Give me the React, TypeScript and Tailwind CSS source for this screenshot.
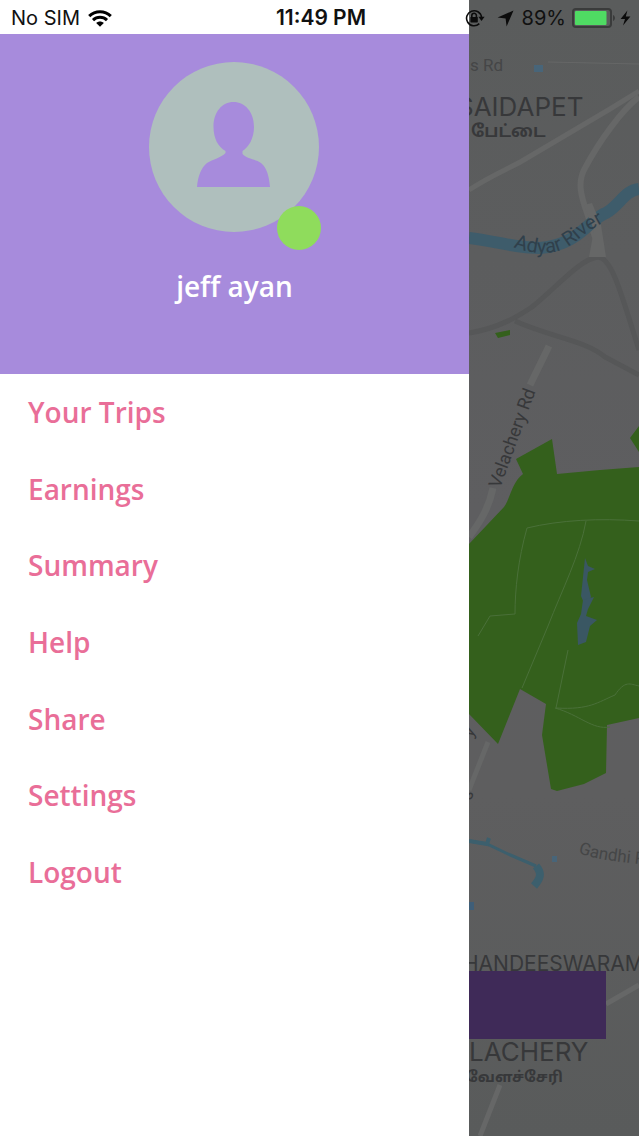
/**
 * App - driver side menu opened over the dimmed map
 *
 * 1. StatusBar lies across both halves
 * 2. Drawer: profile header + menu links
 * 3. DimmedMap fills whatever width is left
 */
const MENU_ITEMS = ['Your Trips', 'Earnings', 'Summary', 'Help', 'Share', 'Settings', 'Logout'];

// === Status bar icons ===
function WifiIcon() {
  return (
    <svg viewBox="0 0 24 17" className="h-[17px] w-6" fill="none" stroke="#000" strokeWidth="3">
      <path d="M1.2 6.2C7.2.4 16.8.4 22.8 6.2" />
      <path d="M5 10.2C9 6.4 15 6.4 19 10.2" />
      <path d="M8.2 13C10.4 11 13.6 11 15.8 13L12 16.8Z" fill="#000" stroke="none" />
    </svg>
  );
}

function RotationLockIcon() {
  return (
    <svg viewBox="0 0 20 18" className="h-[18px] w-5" fill="none" stroke="#0b0b0b" strokeWidth="1.6">
      <path d="M14.3 14.6A7.5 7.5 0 1 1 16.5 8.2" />
      <path d="M13.4 7.7H19.6L16.5 12Z" fill="#0b0b0b" stroke="none" />
      <rect x="5.4" y="8" width="7.4" height="5.4" rx=".6" fill="#0b0b0b" stroke="none" />
      <path d="M6.8 8.4V6.6A2.3 2.3 0 0 1 11.4 6.6V8.4" />
    </svg>
  );
}

function LocationIcon() {
  return (
    <svg viewBox="0 0 17 17" className="size-[17px]" fill="#0b0b0b">
      <path d="M16.5.5 9.6 16.4 8.6 8.6.6 7.5Z" />
    </svg>
  );
}

function BatteryIcon() {
  return (
    <svg viewBox="0 0 44 20" className="h-5 w-11">
      <rect x="1" y="1" width="38" height="18" rx="3" fill="none" stroke="#3a3b3b" strokeWidth="2" />
      <rect x="3" y="3" width="31.5" height="14" rx="1" fill="#4fdb63" />
      <path d="M41 7V13C43.6 12 43.6 8 41 7Z" fill="#3a3b3b" />
    </svg>
  );
}

function BoltIcon() {
  return (
    <svg viewBox="0 0 11 16" className="h-4 w-[11px]" fill="#0b0b0b">
      <path d="M7.4.5.6 9H5L3 15.500 10.4 6.500H5.8Z" />
    </svg>
  );
}

function StatusBar() {
  return (
    <header className="absolute inset-x-0 top-0 z-10 grid h-9 grid-cols-[1fr_auto_1fr] items-center pr-2 pl-[11px] font-['Inter','Liberation_Sans',sans-serif] text-xl text-[#111]">
      <div className="flex items-center gap-2">
        <span>No SIM</span>
        <WifiIcon />
      </div>
      <span className="text-[21px] font-semibold">11:49 PM</span>
      <div className="flex items-center justify-end">
        <RotationLockIcon />
        <span className="ml-3">
          <LocationIcon />
        </span>
        <span className="ml-2">89%</span>
        <span className="ml-1.5">
          <BatteryIcon />
        </span>
        <span className="ml-1">
          <BoltIcon />
        </span>
      </div>
    </header>
  );
}

// === Profile header ===
function Profile() {
  return (
    <section className="flex h-[340px] flex-col items-center bg-[#a78bdc] pt-7">
      {/* a little wider than the avatar, the online dot sticks out of it */}
      <div className="relative w-[172px]">
        <svg viewBox="0 0 170 170" className="size-[170px]">
          <circle cx="85" cy="85" r="85" fill="#afbfbd" />
          <path
            d="M84.500 40C96 40 105 50 105 65C105 76 100 85 93.500 89V92C98 97 106 97 112 101C118 106 120 114 121 125H48C49 114 52 106 58 101C64 97 72 96 76.500 91V89C69 85 64.500 76 64.500 65C64.500 50 73 40 84.500 40Z"
            fill="#a78bdc"
          />
        </svg>
        <span className="absolute right-0 -bottom-[18px] size-11 rounded-full bg-[#8fdc5c]" />
      </div>
      <h1 className="mt-9 text-[28px] leading-9 font-semibold text-white">jeff ayan</h1>
    </section>
  );
}

function Drawer() {
  return (
    <aside className="w-[73.4%] shrink-0 bg-white pt-[34px] font-['Open_Sans','Noto_Sans',sans-serif]">
      <Profile />
      <nav className="grid h-[536px] auto-rows-fr">
        {MENU_ITEMS.map((item) => (
          <a
            key={item}
            href="#"
            className="flex items-center px-7 text-[28px] font-semibold text-[#e96e98]"
          >
            {item}
          </a>
        ))}
      </nav>
    </aside>
  );
}

// === Map under the dark overlay ===
function DimmedMap() {
  return (
    <main className="relative min-w-0 flex-1 overflow-hidden bg-[#5c5d5e]">
      <svg
        viewBox="469 0 170 1136"
        preserveAspectRatio="xMinYMin slice"
        className="absolute inset-0 size-full font-['Roboto','Noto_Sans_Tamil','Noto_Sans',sans-serif]"
      >
        <defs>
          <linearGradient id="land" x1="0" y1="0" x2="0" y2="1">
            <stop offset="0" stopColor="#5a5c5c" />
            <stop offset=".45" stopColor="#5e5e60" />
            <stop offset=".7" stopColor="#5e5e5f" />
            <stop offset="1" stopColor="#595b5b" />
          </linearGradient>
          <path id="adyar" d="M513 247C548 260 566 250 580 238S602 224 630 208" />
          <path id="gandhi" d="M578 853C598 860 618 862 660 866" />
        </defs>
        <rect x="469" y="0" width="170" height="1136" fill="url(#land)" />

        {/* roads */}
        <g fill="none" stroke="#666767" strokeWidth="5">
          <path d="M469 190C490 176 510 168 522 161L610 109 639 91" />
          <path d="M639 97C622 110 600 140 585 168 577 182 581 196 587 213L600 252" strokeWidth="6" />
          <path d="M549 346 530 385M493 488C489 508 480 522 469 537" strokeWidth="7" />
          <path d="M606 1004 639 985M500 1085 480 1136M488 742 469 790" />
          <path d="M548 62 639 64" strokeWidth="1" />
        </g>
        <g fill="none" stroke="#565758" strokeWidth="5">
          <path d="M469 333C500 328 520 315 532 307 558 286 580 259 598 257 612 258 621 293 639 350" />
          <path d="M515 321C550 337 585 340 605 357L639 375" />
        </g>

        {/* water */}
        <path d="M469 238C495 241 515 248 540 248 580 245 590 218 606 213 620 205 624 191 639 189" fill="none" stroke="#3e5c6b" strokeWidth="12" />
        <path d="M584 205 592 203 601 225 606 257H589L594 230Z" fill="#666767" />
        <g fill="none" stroke="#3c5f6d">
          <path d="M469 841 487 844 508 854 536 866" strokeWidth="3" />
          <path d="M469 841 487 844 489 838" strokeWidth="4" />
          <path d="M536 866C542 873 541 878 534 886" strokeWidth="8" />
        </g>
        <rect x="534" y="65" width="9" height="7" fill="#486579" />
        <rect x="552" y="856" width="5" height="6" fill="#486579" />
        <rect x="469" y="902" width="5" height="8" fill="#3f5e78" />

        {/* parks */}
        <g fill="#34601c">
          <path d="M469 544 504 507C510 499 512 482 523 474L516 459 552 439 557 474 600 470 639 467V718L607 725 606 773 584 784 557 791 551 789 542 735 546 704 520 689 498 744 469 714Z" />
          <path d="M639 426 630 438 639 452Z" />
          <path d="M495 333 510 330V335L498 338Z" />
        </g>
        <g fill="none" stroke="#4a7039" strokeWidth="1">
          <path d="M639 521C600 518 560 520 527 528 518 560 515 590 515 614L490 616 478 636" />
          <path d="M586 521C580 555 562 590 548 626L522 688" />
          <path d="M568 650 556 708C590 710 598 702 615 695 625 680 630 684 639 686" />
          <path d="M555 708C580 715 592 730 610 727" />
        </g>
        <g fill="#3a5763">
          <path d="M585 558 588 566 595 569 588 572 587 580 591 597 586 608 581 596Z" />
          <path d="M583 600 594 597 588 609 586 616 597 620 590 626 586 642 578 645 577 623 581 614Z" />
        </g>

        {/* labels */}
        <g fill="#37383a">
          <text x="470" y="71" fontSize="17" fill="#454647">s Rd</text>
          <text x="457" y="116" fontSize="26" className="font-['Inter',sans-serif]">SAIDAPET</text>
          <text x="471" y="137" fontSize="17" fontWeight="700">பேட்டை</text>
          <text fontSize="20" fill="#30404b">
            <textPath href="#adyar">Adyar River</textPath>
          </text>
          <text transform="translate(500 489) rotate(-70)" fontSize="18">Velachery Rd</text>
          <text transform="translate(472 738) rotate(-60)" fontSize="17">y</text>
          <text transform="translate(471 801) rotate(-70)" fontSize="17">s</text>
          <text fontSize="17" fill="#454647">
            <textPath href="#gandhi">Gandhi Rd</textPath>
          </text>
          <text x="463" y="971" fontSize="21" className="font-['Inter',sans-serif]">HANDEESWARAM</text>
          <text x="469" y="1061" fontSize="26" className="font-['Inter',sans-serif]">LACHERY</text>
          <text x="466" y="1082" fontSize="15" fontWeight="700">வேளச்சேரி</text>
        </g>

        <rect x="469" y="971" width="137" height="68" fill="#3f2a58" />
      </svg>
    </main>
  );
}

export default function App() {
  return (
    <div className="relative flex min-h-screen">
      <StatusBar />
      <Drawer />
      <DimmedMap />
    </div>
  );
}
